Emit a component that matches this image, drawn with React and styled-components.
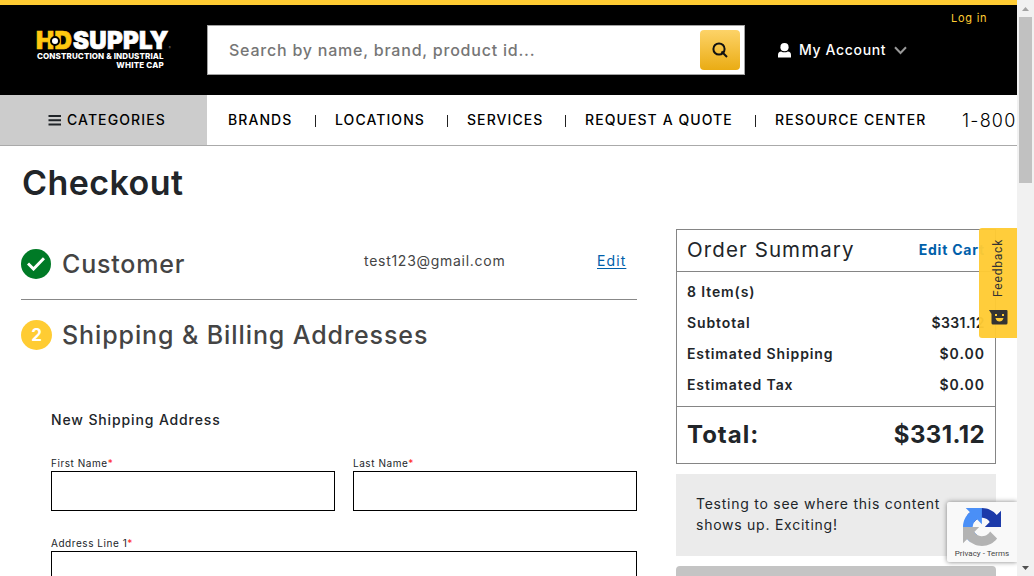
import React from "react";
import styled, { createGlobalStyle } from "styled-components";

const GlobalStyle = createGlobalStyle`
  * { box-sizing: border-box; }
  html, body { margin: 0; padding: 0; overflow: hidden; background: #fff; }
  body { font-family: Inter, "Liberation Sans", sans-serif; color: #212529; }
`;

const Window = styled.div`
  display: flex;
  width: 1034px;
  height: 576px;
  overflow: hidden;
`;

const Page = styled.div`
  position: relative;
  flex: 0 0 1017px;
  height: 576px;
  overflow: hidden;
  background: #fff;
`;

const Text = styled.span`
  display: block;
  white-space: nowrap;
  font-size: ${(p) => p.$size}px;
  line-height: ${(p) => p.$line || 20}px;
  font-weight: ${(p) => p.$weight || 400};
  letter-spacing: ${(p) => p.$track || 0}px;
  color: ${(p) => p.$color || "#212529"};
`;

const Header = styled.header`
  display: flex;
  height: 95px;
  border-top: 5px solid #ffcc33;
  background: #000;
`;

const Brand = styled.a`
  flex: 0 0 207px;
  padding: 26px 0 0 36px;
`;

const Search = styled.div`
  display: flex;
  align-items: center;
  justify-content: space-between;
  width: 538px;
  height: 50px;
  margin-top: 20px;
  padding: 0 4px 0 21px;
  border: 1px solid #a2a2a2;
  background: #fff;
`;

const SearchButton = styled.button`
  display: flex;
  align-items: center;
  justify-content: center;
  width: 40px;
  height: 40px;
  padding: 0;
  border: 0;
  border-radius: 4px;
  background: linear-gradient(#fdd368, #eaac14);
`;

const Account = styled.div`
  display: flex;
  align-items: center;
  height: 50px;
  margin: 20px 0 0 33px;
  width: 173px;
`;

const AccountLabel = styled(Text)`
  width: 95px;
  margin-left: 8px;
`;

const Login = styled.a`
  padding-top: 3px;
`;

const Nav = styled.nav`
  display: flex;
  height: 51px;
  border-bottom: 1px solid #aaa;
`;

const Categories = styled.div`
  display: flex;
  align-items: center;
  flex: 0 0 207px;
  padding-left: 48px;
  gap: 6px;
  background: #ccc;
`;

const Links = styled.div`
  display: flex;
  align-items: center;
  padding-left: 21px;
`;

const NavItem = styled(Text)`
  flex: 0 0 ${(p) => p.$width}px;
`;

const Phone = styled(Text)`
  margin-left: 35px;
  padding-top: 1px;
`;

const Divider = styled.i`
  flex: 0 0 1px;
  height: 12px;
  margin: 2px 19px 0 21px;
  background: #222;
`;

const Main = styled.main`
  display: flex;
  padding-left: 21px;
`;

const Steps = styled.section`
  width: 616px;
`;

const Title = styled(Text).attrs({ as: "h1" })`
  margin: 16px 0 0 1px;
`;

const StepHead = styled.div`
  display: flex;
  align-items: center;
  height: ${(p) => p.$height}px;
  padding: ${(p) => p.$top || 0}px 10px 0 0;
  border-bottom: ${(p) => (p.$ruled ? "1px solid #888" : "0")};
`;

const Badge = styled.span`
  display: flex;
  align-items: center;
  justify-content: center;
  flex: 0 0 ${(p) => p.$width}px;
  height: 30px;
  margin-right: ${(p) => 41 - p.$width}px;
  border-radius: 50%;
  background: ${(p) => p.$fill};
`;

const Email = styled(Text)`
  width: 233px;
  margin-top: -5px;
`;

const StepName = styled(Text)`
  width: ${(p) => p.$width}px;
`;

const EditLink = styled(Text)`
  margin-top: -5px;
  text-decoration: underline;
  text-underline-offset: 2px;
`;

const Form = styled.form`
  padding: 41px 0 0 30px;
`;

const Fields = styled.div`
  display: flex;
  gap: 18px;
  margin-top: ${(p) => p.$top}px;
`;

const Field = styled.label`
  flex: 1;
`;

const Required = styled.span`
  color: #f22;
`;

const Input = styled.input`
  display: block;
  width: 100%;
  height: 40px;
  border: 1px solid #000;
  border-radius: 0;
  background: #fff;
`;

const Aside = styled.aside`
  width: 320px;
  margin: 83px 0 0 39px;
`;

const Summary = styled.section`
  border: 1px solid #858585;
`;

const SummaryRow = styled.div`
  display: flex;
  align-items: center;
  justify-content: space-between;
  height: ${(p) => p.$height}px;
  padding: 0 10px 0 10px;
`;

const SummaryHead = styled(SummaryRow)`
  padding-bottom: 2px;
`;

const SummaryLines = styled.div`
  padding: 4px 0 6px;
  border: solid #858585;
  border-width: 1px 0;
`;

const Notice = styled.div`
  height: 82px;
  margin-top: 10px;
  padding: 19px 20px 0;
  background: #ebebeb;
`;

const Submit = styled.div`
  height: 40px;
  margin-top: 10px;
  border-radius: 4px;
  background: #c4c4c4;
`;

const Feedback = styled.button`
  position: absolute;
  top: 228px;
  right: 0;
  display: flex;
  flex-direction: column;
  align-items: center;
  width: 38px;
  height: 110px;
  padding: 11px 0 0 0;
  border: 0;
  border-radius: 3px 0 0 3px;
  background: rgba(255, 203, 51, 0.96);
`;

const FeedbackLabel = styled(Text)`
  height: 58px;
  margin-bottom: 13px;
  writing-mode: vertical-rl;
  transform: rotate(180deg);
  font-family: Roboto, sans-serif;
`;

const Captcha = styled.div`
  position: absolute;
  right: 0;
  bottom: 14px;
  display: flex;
  flex-direction: column;
  align-items: center;
  width: 70px;
  height: 60px;
  padding-top: 6px;
  border-radius: 2px 0 0 2px;
  background: #f9f9f9;
  box-shadow: 0 0 5px #808080;
`;

const CaptchaText = styled(Text)`
  font-family: Roboto, sans-serif;
`;

const Scrollbar = styled.div`
  display: flex;
  flex-direction: column;
  justify-content: space-between;
  align-items: center;
  flex: 0 0 17px;
  height: 576px;
  background: #f1f1f1;
`;

const Thumb = styled.div`
  width: 13px;
  height: 166px;
  margin-bottom: auto;
  background: #c1c1c1;
`;

const Arrow = styled.svg`
  display: block;
  flex: 0 0 17px;
`;

const LogoName = styled.div`
  display: flex;
  align-items: center;
  width: 135px;
  height: 20px;
`;

const LogoWord = styled(Text)`
  -webkit-text-stroke: 0.7px ${(p) => p.$color};
`;

const LogoHD = styled(LogoWord)`
  position: relative;
  flex: 0 0 37px;
`;

const LogoDot = styled.svg`
  position: absolute;
  left: 13px;
  top: 4px;
`;

const LogoMark = styled(Text)`
  align-self: flex-end;
`;

const LogoLine = styled(Text)`
  width: 128px;
  padding-left: 1px;
  text-align: ${(p) => (p.$end ? "right" : "left")};
`;

function Logo() {
  return (
    <Brand>
      <LogoName>
        <LogoHD $size={24} $weight={900} $track={0.6} $color="#ffc810">
          HD
          <LogoDot width="12" height="12" viewBox="0 0 12 12">
            <circle cx="6" cy="6" r="4" fill="#fff" stroke="#000" strokeWidth="2" />
          </LogoDot>
        </LogoHD>
        <LogoWord $size={24} $weight={900} $track={0.3} $color="#fff">SUPPLY</LogoWord>
        <LogoMark $size={3} $line={5} $color="#888">®</LogoMark>
      </LogoName>
      <LogoLine $size={8} $line={10} $weight={800} $track={0.11} $color="#fff">CONSTRUCTION &amp; INDUSTRIAL</LogoLine>
      <LogoLine $end $size={8} $line={8} $weight={800} $track={0.2} $color="#fff">WHITE CAP</LogoLine>
    </Brand>
  );
}

const LINKS = [
  ["BRANDS", 66],
  ["LOCATIONS", 91],
  ["SERVICES", 77],
  ["REQUEST A QUOTE", 149],
  ["RESOURCE CENTER", 152],
];

const AMOUNTS = [
  ["8 Item(s)", ""],
  ["Subtotal", "$331.12", 0.4],
  ["Estimated Shipping", "$0.00", 1],
  ["Estimated Tax", "$0.00", 1],
];

function LabeledInput({ label }) {
  return (
    <Field>
      <Text $size={10} $line={15} $track={0.55}>
        {label}
        <Required>*</Required>
      </Text>
      <Input />
    </Field>
  );
}

export default function App() {
  return (
    <Window>
      <GlobalStyle />
      <Page>
        <Header>
          <Logo />
          <Search>
            <Text $size={16} $weight={500} $track={0.78} $color="#767676">Search by name, brand, product id...</Text>
            <SearchButton>
              <svg width="16" height="16" viewBox="0 0 16 16" fill="none" stroke="#111" strokeWidth="2">
                <circle cx="7" cy="7" r="5.6" />
                <path d="M9.5 9.5L15 15" />
              </svg>
            </SearchButton>
          </Search>
          <Account>
            <svg width="13" height="15" viewBox="0 0 13 15" fill="#fff">
              <circle cx="6.5" cy="4.2" r="4.1" />
              <path d="M0 14.5V12Q0 8.6 3.2 8.4Q6.5 10.2 9.8 8.4Q13 8.6 13 12V14.5Z" />
            </svg>
            <AccountLabel $size={14} $weight={500} $track={0.65} $color="#fff">My Account</AccountLabel>
            <svg width="13" height="9" viewBox="0 0 13 9" fill="none" stroke="#999" strokeWidth="2">
              <path d="M1 1.2L6.5 7L12 1.2" />
            </svg>
          </Account>
          <Login>
            <Text $size={11} $track={0.75} $color="#ffcc33">Log in</Text>
          </Login>
        </Header>
        <Nav>
          <Categories>
            <svg width="13" height="11" viewBox="0 0 13 11" fill="#212529">
              <path d="M0.5 0H13V2H0.5ZM0.5 4.3H13V6.3H0.5ZM0.5 8.5H13V10.5H0.5Z" />
            </svg>
            <Text $size={14} $weight={500} $track={1.1} $color="#000">CATEGORIES</Text>
          </Categories>
          <Links>
            {LINKS.map(([name, width], i) => (
              <React.Fragment key={name}>
                {i > 0 && <Divider />}
                <NavItem $width={width} $size={14} $weight={500} $track={1.08} $color="#000">{name}</NavItem>
              </React.Fragment>
            ))}
            <Phone $size={18} $weight={300} $track={1.2} $color="#000">1-800</Phone>
          </Links>
        </Nav>
        <Main>
          <Steps>
            <Title $size={34} $line={42} $weight={600} $track={0.45}>Checkout</Title>
            <StepHead $height={96} $top={24} $ruled>
              <Badge $width={30} $fill="#007a26">
                <svg width="18" height="14" viewBox="0 0 18 14" fill="none" stroke="#fff" strokeWidth="3">
                  <path d="M1 6.5L6.5 12L17 1.2" />
                </svg>
              </Badge>
              <StepName $width={302} $size={25} $line={30} $weight={500} $track={0.8} $color="#444">Customer</StepName>
              <Email $size={14} $track={0.72} $color="#444">test123@gmail.com</Email>
              <EditLink $size={14} $track={1.1} $color="#0060aa">Edit</EditLink>
            </StepHead>
            <StepHead $height={69}>
              <Badge $width={31} $fill="#ffcc33">
                <Text $size={17} $weight={700} $color="#fff">2</Text>
              </Badge>
              <Text $size={25} $line={30} $weight={500} $track={0.9} $color="#444">Shipping &amp; Billing Addresses</Text>
            </StepHead>
            <Form>
              <Text $size={14} $weight={500} $track={0.87}>New Shipping Address</Text>
              <Fields $top={26}>
                <LabeledInput label="First Name" />
                <LabeledInput label="Last Name" />
              </Fields>
              <Fields $top={25}>
                <LabeledInput label="Address Line 1" />
              </Fields>
            </Form>
          </Steps>
          <Aside>
            <Summary>
              <SummaryHead $height={41}>
                <Text $size={20.5} $line={24} $track={1.1}>Order Summary</Text>
                <Text $size={14} $weight={700} $track={0.8} $color="#0060aa">Edit Cart</Text>
              </SummaryHead>
              <SummaryLines>
                {AMOUNTS.map(([name, value, track]) => (
                  <SummaryRow key={name} $height={31}>
                    <Text $size={14} $weight={600} $track={0.88}>{name}</Text>
                    <Text $size={14} $weight={600} $track={track}>{value}</Text>
                  </SummaryRow>
                ))}
              </SummaryLines>
              <SummaryRow $height={56}>
                <Text $size={24} $line={30} $weight={700} $track={1}>Total:</Text>
                <Text $size={24} $line={30} $weight={700} $track={0.4}>$331.12</Text>
              </SummaryRow>
            </Summary>
            <Notice>
              <Text $size={14} $line={21} $track={0.75}>
                Testing to see where this content
                <br />
                shows up. Exciting!
              </Text>
            </Notice>
            <Submit />
          </Aside>
        </Main>
        <Feedback>
          <FeedbackLabel $size={12} $track={0.8} $color="#333">Feedback</FeedbackLabel>
          <svg width="19" height="15" viewBox="0 0 19 15">
            <path d="M0 0H17.5Q18.5 0 18.5 1V13Q18.5 14.5 17 14.5H4Q2.5 14.5 2.5 13V4Z" fill="#333" />
            <path d="M6 4H8V6H6ZM13 4H15V6H13ZM6.5 8H14.5Q13.5 11.5 10.5 11.5Q7.5 11.5 6.5 8Z" fill="#ffcb33" />
          </svg>
        </Feedback>
        <Captcha>
          <svg width="38" height="38" viewBox="0 0 64 64">
            <path fill="#1c3aa9" d="M64 31.955l-.033-1.37V4.687l-7.16 7.16C50.948 4.674 42.033.093 32.05.093c-10.4 0-19.622 4.96-25.458 12.64l11.736 11.86a15.55 15.55 0 0 1 4.754-5.334c2.05-1.6 4.952-2.906 8.968-2.906.485 0 .86.057 1.135.163 4.976.393 9.288 3.14 11.828 7.124l-8.307 8.307L64 31.953" />
            <path fill="#4a8ff7" d="M31.862.094l-1.37.033H4.594l7.16 7.16C4.58 13.147 0 22.06 0 32.046c0 10.4 4.96 19.622 12.64 25.458L24.5 45.768a15.55 15.55 0 0 1-5.334-4.754c-1.6-2.05-2.906-4.952-2.906-8.968 0-.485.057-.86.163-1.135.393-4.976 3.14-9.288 7.124-11.828l8.307 8.307L31.86.095" />
            <path fill="#b3b3b3" d="M.001 32.045l.033 1.37v25.898l7.16-7.16c5.86 7.173 14.774 11.754 24.76 11.754 10.4 0 19.622-4.96 25.458-12.64l-11.736-11.86a15.55 15.55 0 0 1-4.754 5.334c-2.05 1.6-4.952 2.906-8.968 2.906-.485 0-.86-.057-1.135-.163-4.976-.393-9.288-3.14-11.828-7.124l8.307-8.307c-10.522.04-22.4.066-27.295-.005" />
          </svg>
          <CaptchaText $size={8} $line={15} $color="#444">Privacy - Terms</CaptchaText>
        </Captcha>
      </Page>
      <Scrollbar>
        <Arrow width="17" height="17" viewBox="0 0 17 17" fill="#a3a3a3">
          <path d="M5 11L8.5 7L12 11Z" />
        </Arrow>
        <Thumb />
        <Arrow width="17" height="17" viewBox="0 0 17 17" fill="#505050">
          <path d="M5 7L8.5 11L12 7Z" />
        </Arrow>
      </Scrollbar>
    </Window>
  );
}
